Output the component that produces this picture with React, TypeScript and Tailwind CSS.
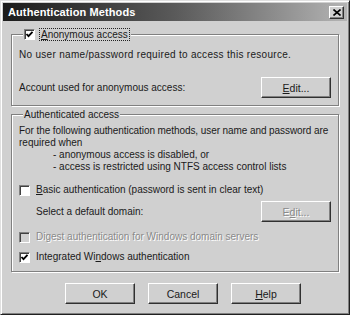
import type { ReactNode } from "react";

const Check = ({ checked, disabled }: { checked?: boolean; disabled?: boolean }) => (
  <span
    className={`flex items-center justify-center w-[11px] h-[11px] shrink-0 border border-t-[#808080] border-l-[#808080] border-b-white border-r-white shadow-[inset_1px_1px_0_#404040] ${
      disabled ? "bg-[#d0d0d0]" : "bg-white"
    }`}
  >
    {checked && (
      <svg width="9" height="9" viewBox="0 0 9 9">
        <polyline points="1.5,4 3.5,6.2 7.5,1.8" fill="none" stroke="#000" strokeWidth="1.8" />
      </svg>
    )}
  </span>
);

const Button = ({ children, disabled, className = "" }: { children: ReactNode; disabled?: boolean; className?: string }) => (
  <div
    className={`flex items-center justify-center w-[70px] h-[21px] text-[10.5px] border border-t-white border-l-white border-r-[#303030] border-b-[#303030] shadow-[inset_-1px_-1px_0_#808080] ${
      disabled ? "text-[#8a8a8a] [text-shadow:1px_1px_0_#fff]" : ""
    } ${className}`}
  >
    {children}
  </div>
);

const Group = ({ label, children, className = "" }: { label: ReactNode; children: ReactNode; className?: string }) => (
  <div className={`border border-[#808080] shadow-[1px_1px_0_#fff,inset_1px_1px_0_#fff] ${className}`}>
    <div className="w-fit ml-[4px] -mt-[7px] px-[1px] bg-[#d0d0d0] flex items-center">{label}</div>
    {children}
  </div>
);

export default function App() {
  return (
    <div className="w-[350px] h-[315px] bg-[#d0d0d0] font-['Liberation_Sans',Arial,sans-serif] text-[10px] leading-[12px] whitespace-nowrap text-[#1a1a1a] border border-t-[#e0e0e0] border-l-[#e0e0e0] border-r-[#202020] border-b-[#202020] shadow-[inset_1px_1px_0_#fff,inset_-1px_-1px_0_#808080] p-[2px]">
      {/* Title bar */}
      <div className="h-[18px] flex items-center justify-between bg-gradient-to-r from-[#1c1c1c] via-[#5a5a5a] to-[#b4b4b4] pl-[5px] pr-[3px]">
        <span className="text-white font-bold text-[11px] tracking-[0.1px]">Authentication Methods</span>
        <div className="flex items-center justify-center w-[15px] h-[13px] bg-[#d0d0d0] border border-t-white border-l-white border-r-[#303030] border-b-[#303030] shadow-[inset_-1px_-1px_0_#808080]">
          <svg width="8" height="7" viewBox="0 0 8 7">
            <path d="M0.5 0.5 L7.5 6.5 M7.5 0.5 L0.5 6.5" stroke="#000" strokeWidth="1.6" />
          </svg>
        </div>
      </div>

      <div className="px-[8px]">
        {/* Anonymous access */}
        <Group
          className="mt-[13px] pl-[7px] pr-[7px] pb-[7px]"
          label={
            <>
              <Check checked />
              <span className="ml-[4px] px-[1px] border border-dotted border-[#222] leading-[11px]">
                <span className="underline">A</span>nonymous access
              </span>
            </>
          }
        >
          <div className="mt-[8px] tracking-[0.3px]">No user name/password required to access this resource.</div>
          <div className="mt-[16px] flex items-center justify-between">
            <span>Account used for anonymous access:</span>
            <Button>
              <span className="underline">E</span>dit...
            </Button>
          </div>
        </Group>

        {/* Authenticated access */}
        <Group
          className="mt-[8px] pl-[7px] pr-[7px] pb-[8px]"
          label={<span className="leading-[13px]">Authenticated access</span>}
        >
          <div className="mt-[4px] tracking-[-0.08px]">For the following authentication methods, user name and password are</div>
          <div>required when</div>
          <div className="pl-[34px]">- anonymous access is disabled, or</div>
          <div className="pl-[34px]">- access is restricted using NTFS access control lists</div>

          <div className="mt-[11px] flex items-center">
            <Check />
            <span className="ml-[6px]">
              <span className="underline">B</span>asic authentication (password is sent in clear text)
            </span>
          </div>
          <div className="mt-[5px] flex items-center justify-between">
            <span className="pl-[17px]">Select a default domain:</span>
            <Button disabled>
              E<span className="underline">d</span>it...
            </Button>
          </div>
          <div className="mt-[9px] flex items-center">
            <Check disabled />
            <span className="ml-[6px] text-[#8a8a8a] [text-shadow:1px_1px_0_#fff]">
              Digest authentication for Windows domain servers
            </span>
          </div>
          <div className="mt-[8px] flex items-center">
            <Check checked />
            <span className="ml-[6px]">
              Integrated Wi<span className="underline">n</span>dows authentication
            </span>
          </div>
        </Group>

        {/* Dialog buttons */}
        <div className="mt-[11px] flex gap-[13px] pl-[54px]">
          <Button>OK</Button>
          <Button>Cancel</Button>
          <Button>
            <span className="underline">H</span>elp
          </Button>
        </div>
      </div>
    </div>
  );
}
